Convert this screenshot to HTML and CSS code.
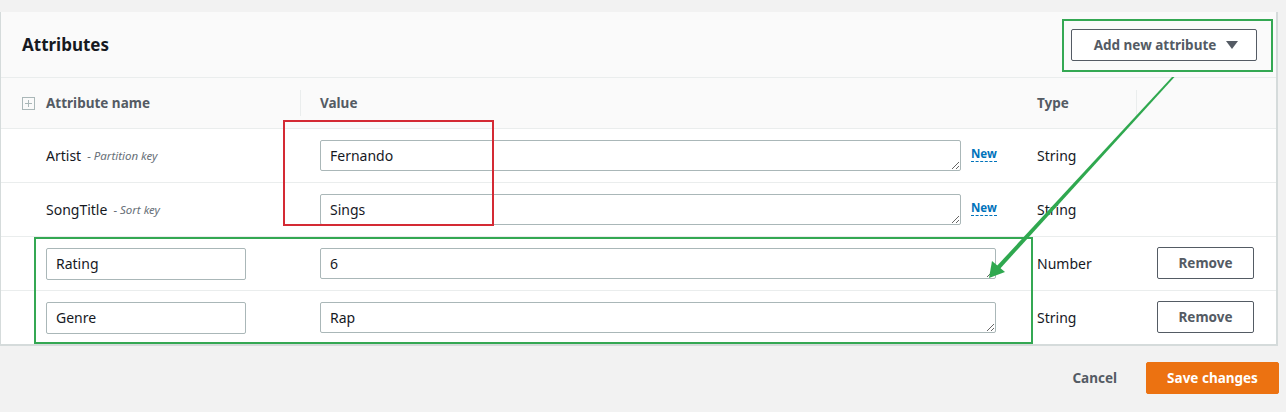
FILE: index.html
```html
<!DOCTYPE html>
<html>
<head>
<meta charset="utf-8">
<link rel="stylesheet" href="styles.css">
</head>
<body>
<div class="page">
  <section class="panel">
    <header class="panel-head">
      <h2 class="title">Attributes</h2>
      <button class="btn btn-add">Add new attribute <span class="caret"></span></button>
    </header>
    <div class="grid">
      <div class="th th-name"><span class="expand"></span>Attribute name</div>
      <div class="th th-sep">Value</div>
      <div class="th">Type</div>
      <div class="th th-sep"></div>

      <div class="td td-name">Artist <span class="key">- Partition key</span></div>
      <div class="td td-val"><textarea class="ta ta-short">Fernando</textarea><a class="new">New</a></div>
      <div class="td">String</div>
      <div class="td"></div>

      <div class="td td-name">SongTitle <span class="key">- Sort key</span></div>
      <div class="td td-val"><textarea class="ta ta-short">Sings</textarea><a class="new">New</a></div>
      <div class="td">String</div>
      <div class="td"></div>

      <div class="td td-name"><input class="inp" value="Rating"></div>
      <div class="td td-val"><textarea class="ta ta-full">6</textarea></div>
      <div class="td">Number</div>
      <div class="td"><button class="btn btn-remove">Remove</button></div>

      <div class="td td-name"><input class="inp" value="Genre"></div>
      <div class="td td-val"><textarea class="ta ta-full">Rap</textarea></div>
      <div class="td">String</div>
      <div class="td"><button class="btn btn-remove">Remove</button></div>
    </div>
  </section>
  <footer class="actions">
    <a class="cancel">Cancel</a>
    <button class="btn btn-save">Save changes</button>
  </footer>

  <div class="mark mark-add"></div>
  <div class="mark mark-red"></div>
  <div class="mark mark-rows"></div>
  <svg class="arrow" width="1286" height="412" viewBox="0 0 1286 412">
    <polygon points="1172,77 1174.5,77 998,271 995,268" fill="#2fa84f"/>
    <polygon points="989,278 992,261 1005,272" fill="#2fa84f"/>
  </svg>
</div>
</body>
</html>
```

FILE: styles.css
```css
* { box-sizing: border-box; }
html, body { margin: 0; padding: 0; }
body {
  background: #f2f2f2;
  font-family: "Noto Sans", "Open Sans", sans-serif;
  font-size: 14px;
  color: #16191f;
  width: 1286px;
  height: 412px;
  overflow: hidden;
}
.page { position: relative; padding-top: 12px; height: 412px; }
.panel {
  width: 1278px;
  background: #fff;
  border-left: 1px solid #d5dbdb;
  border-right: 2px solid #d5dbdb;
  border-bottom: 2px solid #d5dbdb;
}
.panel-head {
  height: 66px;
  background: #fafafa;
  border-bottom: 1px solid #eaeded;
  display: flex;
  align-items: center;
  justify-content: space-between;
  padding: 0 19px 0 21px;
}
.title { margin: 0; font-size: 17px; font-weight: 700; color: #16191f; }
.btn {
  font-family: inherit;
  font-weight: 700;
  font-size: 13.5px;
  color: #545b64;
  background: #fff;
  border: 1px solid #545b64;
  border-radius: 2px;
  height: 32px;
  cursor: pointer;
}
.btn-add { width: 186px; display: flex; align-items: center; justify-content: center; gap: 10px; padding: 0 0 0 4px; }
.caret { width: 0; height: 0; border-left: 6px solid transparent; border-right: 6px solid transparent; border-top: 8px solid #545b64; }
.grid {
  display: grid;
  grid-template-columns: 299px 717px 119px 1fr;
}
.th {
  height: 50px;
  background: #fafafa;
  display: flex;
  align-items: center;
  padding-left: 20px;
  font-weight: 700;
  color: #545b64;
  font-size: 13.5px;
  position: relative;
}
.th-sep::before {
  content: "";
  position: absolute;
  left: 0; top: 12px; bottom: 12px;
  border-left: 1px solid #eaeded;
}
.th-name { padding-left: 21px; }
.expand {
  width: 13px; height: 13px;
  border: 1px solid #aab7b8;
  margin-right: 11px;
  position: relative;
}
.expand::before, .expand::after { content: ""; position: absolute; background: #aab7b8; }
.expand::before { left: 2px; right: 2px; top: 5px; height: 1px; }
.expand::after { top: 2px; bottom: 2px; left: 5px; width: 1px; }
.td {
  height: 54px;
  border-top: 1px solid #eaeded;
  display: flex;
  align-items: center;
  padding-left: 20px;
  font-size: 14px;
}
.td-name { padding-left: 45px; }
.key { font-style: italic; font-size: 11.5px; color: #687078; margin-left: 6px; }
.ta {
  font-family: inherit;
  font-size: 14px;
  color: #16191f;
  height: 31px;
  border: 1px solid #aab7b8;
  border-radius: 2px;
  padding: 5px 9px 0;
  resize: vertical;
  overflow: hidden;
  margin: 0;
}
.ta-short { width: 641px; }
.ta-full { width: 676px; }
.new {
  margin-left: 10px;
  color: #0073bb;
  font-weight: 700;
  font-size: 11.5px;
  border-bottom: 1px dashed #0073bb;
  line-height: 14px;
  margin-top: -2px;
}
.inp {
  font-family: inherit;
  font-size: 14px;
  color: #16191f;
  width: 200px;
  height: 32px;
  border: 1px solid #aab7b8;
  border-radius: 2px;
  padding: 0 9px;
  margin: 0;
}
.btn-remove { width: 97px; margin-left: 1px; margin-top: -1px; }
.actions {
  display: flex;
  justify-content: flex-end;
  align-items: center;
  gap: 29px;
  padding: 16px 7px 0 0;
}
.cancel { font-weight: 700; color: #545b64; font-size: 13.5px; }
.btn-save {
  background: #ec7211;
  border-color: #ec7211;
  color: #fff;
  width: 133px;
  height: 32px;
}
.mark { position: absolute; border: 2px solid #34a853; }
.mark-add { left: 1062px; top: 19px; width: 211px; height: 53px; }
.mark-red { left: 283px; top: 120px; width: 211px; height: 106px; border-color: #d42a34; }
.mark-rows { left: 34px; top: 237px; width: 999px; height: 107px; }
.arrow { position: absolute; left: 0; top: 0; pointer-events: none; }
```
